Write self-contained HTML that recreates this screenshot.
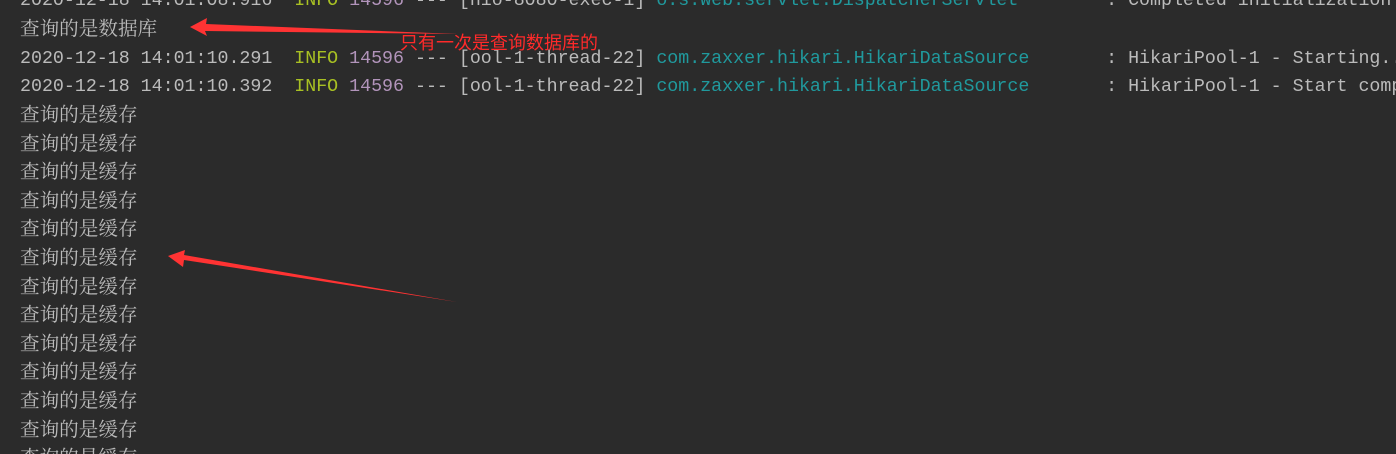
<!DOCTYPE html>
<html><head><meta charset="utf-8"><style>
html,body{margin:0;padding:0;background:#2b2b2b;width:1396px;height:454px;overflow:hidden;position:relative}
.l{position:absolute;left:20px;width:1376px;overflow:hidden;white-space:pre;color:#bbbbbb;height:28px;line-height:28px}
.m{font-family:"Liberation Mono",monospace;font-size:18.3px}
.c{font-family:"Liberation Serif","Noto Serif CJK SC",serif;font-size:19.6px}
.i{color:#a8c023}.p{color:#b294bb}.k{color:#20999d}
.ann{position:absolute;left:400px;top:31px;color:#ff2a2a;font-family:"Liberation Sans","Noto Sans CJK SC",sans-serif;font-size:18px;line-height:24px}
svg{position:absolute;left:0;top:0}
</style></head><body>
<div class="l m" style="top:-13px">2020-12-18 14:01:08.916  <span class="i">INFO</span> <span class="p">14596</span> --- [nio-8080-exec-1] <span class="k">o.s.web.servlet.DispatcherServlet       </span> : Completed initialization</div>
<div class="l c" style="top:16px">查询的是数据库</div>
<div class="l m" style="top:45px">2020-12-18 14:01:10.291  <span class="i">INFO</span> <span class="p">14596</span> --- [ool-1-thread-22] <span class="k">com.zaxxer.hikari.HikariDataSource      </span> : HikariPool-1 - Starting...</div>
<div class="l m" style="top:73px">2020-12-18 14:01:10.392  <span class="i">INFO</span> <span class="p">14596</span> --- [ool-1-thread-22] <span class="k">com.zaxxer.hikari.HikariDataSource      </span> : HikariPool-1 - Start completed.</div>
<div class="l c" style="top:102px">查询的是缓存</div>
<div class="l c" style="top:130.6px">查询的是缓存</div>
<div class="l c" style="top:159.2px">查询的是缓存</div>
<div class="l c" style="top:187.8px">查询的是缓存</div>
<div class="l c" style="top:216.4px">查询的是缓存</div>
<div class="l c" style="top:245px">查询的是缓存</div>
<div class="l c" style="top:273.6px">查询的是缓存</div>
<div class="l c" style="top:302.2px">查询的是缓存</div>
<div class="l c" style="top:330.8px">查询的是缓存</div>
<div class="l c" style="top:359.4px">查询的是缓存</div>
<div class="l c" style="top:388px">查询的是缓存</div>
<div class="l c" style="top:416.6px">查询的是缓存</div>
<div class="l c" style="top:445.2px">查询的是缓存</div>
<div class="ann">只有一次是查询数据库的</div>
<svg width="1396" height="454">
<polygon fill="#ff3333" points="190,27 207,18 206,24 458,34 205,31 207,36"/>
<polygon fill="#ff3333" points="168,256 185,250 184,255 457,302 184,260 183,267"/>
</svg>
</body></html>
